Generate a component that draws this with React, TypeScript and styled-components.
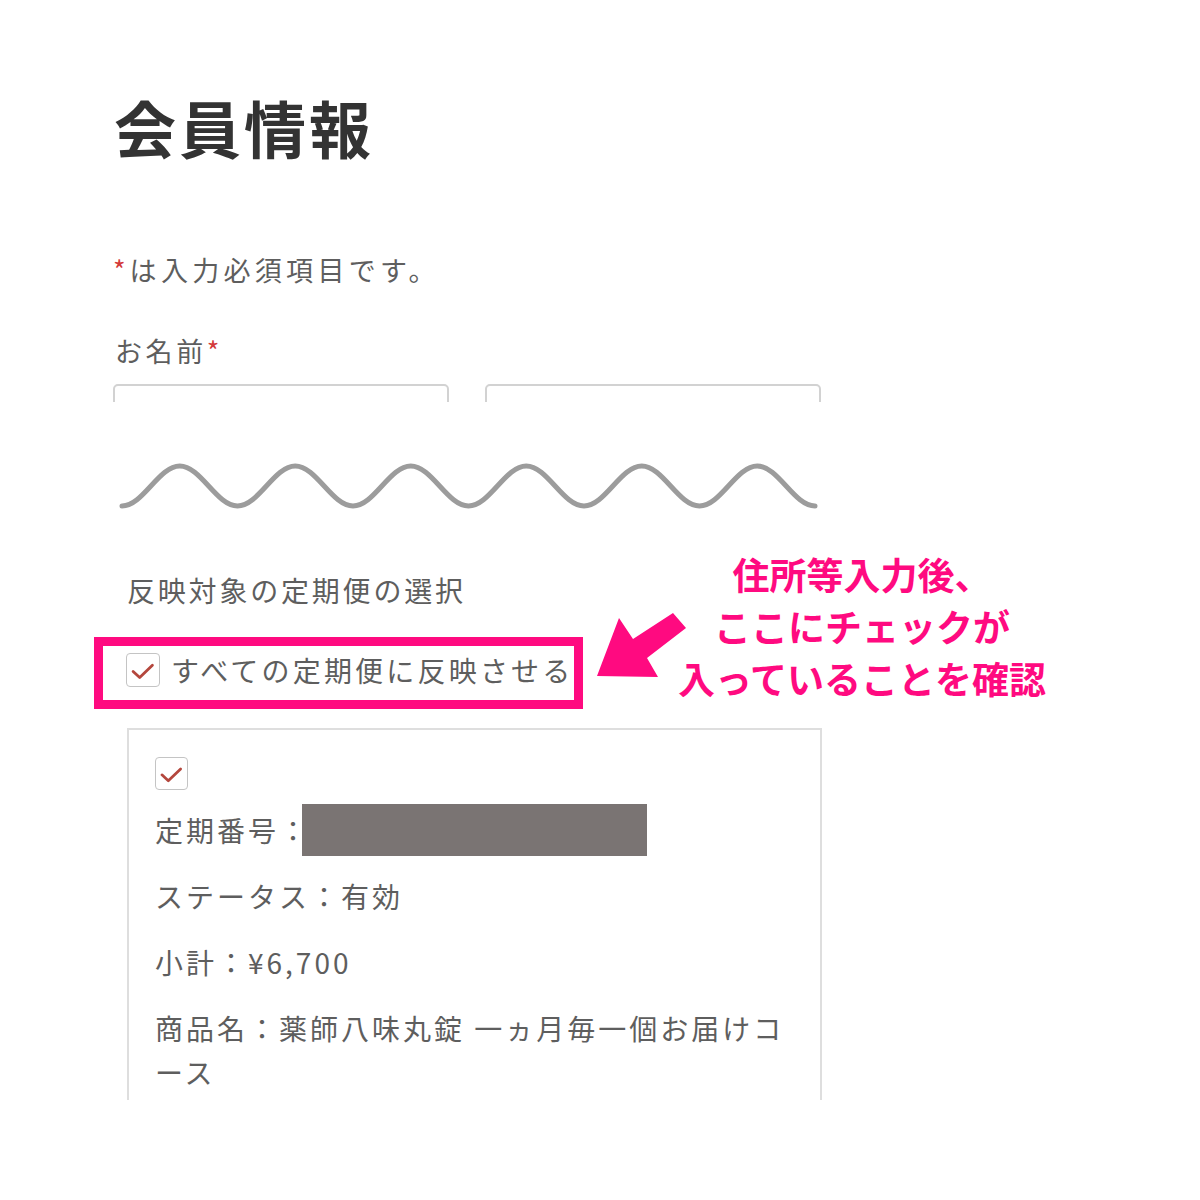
import React from "react";
import styled, { createGlobalStyle } from "styled-components";

const GlobalStyle = createGlobalStyle`
  html, body {
    margin: 0;
    padding: 0;
    background: #ffffff;
  }
  body {
    font-family: "Noto Sans CJK JP", "Noto Sans", sans-serif;
  }
`;

const PINK = "#ff0a80";
const TEXT = "#5e5e5e";

const Page = styled.div`
  position: relative;
  width: 1200px;
  height: 1200px;
  overflow: hidden;
  background: #fff;
  box-sizing: border-box;
  padding: 92px 0 0 113px;
  display: flex;
  flex-direction: column;
  align-items: flex-start;
  & > * {
    flex-shrink: 0;
  }
`;

const TopShot = styled.section`
  display: flex;
  flex-direction: column;
  align-items: flex-start;
`;

const Title = styled.h1`
  margin: 0 0 0 1px;
  font-size: 62px;
  line-height: 70px;
  font-weight: 700;
  letter-spacing: 3px;
  color: #333;
`;

const Note = styled.p`
  margin: 88px 0 0 0;
  font-size: 27px;
  line-height: 40px;
  letter-spacing: 4.3px;
  color: ${TEXT};
`;

const Req = styled.span`
  color: #d33a3a;
  letter-spacing: 0;
  margin-right: 4px;
`;

const FieldLabel = styled.p`
  margin: 41px 0 0 2px;
  font-size: 27px;
  line-height: 40px;
  letter-spacing: 3.6px;
  color: ${TEXT};
`;

const InputClip = styled.div`
  margin-top: 13px;
  height: 18px;
  overflow: hidden;
  display: flex;
  gap: 36px;
`;

const TextInput = styled.div<{ $w: number }>`
  width: ${(p) => p.$w}px;
  height: 50px;
  box-sizing: border-box;
  border: 2px solid #d2d2d2;
  border-radius: 5px;
  background: #fff;
`;

const WaveSvg = styled.svg`
  display: block;
  margin-top: 53px;
  overflow: visible;
`;

const BottomShot = styled.section`
  margin-top: 55px;
  margin-left: -20px;
  padding-left: 20px;
  height: 530px;
  overflow: hidden;
  display: flex;
  flex-direction: column;
  align-items: flex-start;
  & > * {
    flex-shrink: 0;
  }
`;

const SectionLabel = styled.p`
  margin: 0 0 0 14px;
  font-size: 28px;
  line-height: 40px;
  letter-spacing: 2.8px;
  color: ${TEXT};
`;

const Highlight = styled.div`
  margin: 27px 0 0 -19px;
  box-sizing: border-box;
  height: 72px;
  border: 9px solid ${PINK};
  padding: 0 0 6px 23px;
  display: flex;
  align-items: center;
  gap: 11px;
`;

const Box = styled.span<{ $size: number }>`
  flex: none;
  width: ${(p) => p.$size}px;
  height: ${(p) => p.$size}px;
  box-sizing: border-box;
  border: 1.5px solid #c4c4c4;
  border-radius: 4px;
  background: #fff;
  display: flex;
  align-items: center;
  justify-content: center;
`;

const CheckLabel = styled.span`
  font-size: 28px;
  line-height: 40px;
  letter-spacing: 3.2px;
  color: ${TEXT};
  white-space: nowrap;
`;

const Card = styled.div`
  margin: 19px 0 0 14px;
  width: 695px;
  box-sizing: border-box;
  border: 2px solid #dedede;
  padding: 27px 25px 40px 26px;
  display: flex;
  flex-direction: column;
  align-items: flex-start;
  gap: 22px;
`;

const CardCheck = styled.div`
  margin-bottom: -4px;
`;

const Row = styled.div`
  display: flex;
  align-items: center;
  min-height: 44px;
  font-size: 28px;
  line-height: 44px;
  letter-spacing: 3px;
  color: ${TEXT};
`;

const Redacted = styled.span`
  display: block;
  width: 345px;
  height: 52px;
  margin: -4px 0 -4px -8px;
  background: #7a7473;
`;

const Annotation = styled.div`
  position: absolute;
  left: 662px;
  top: 548px;
  width: 400px;
  text-align: center;
  font-size: 37px;
  line-height: 52px;
  font-weight: 700;
  color: ${PINK};
  letter-spacing: 0;
`;

const ArrowSvg = styled.svg`
  position: absolute;
  left: 590px;
  top: 605px;
`;

function Check({ size }: { size: number }) {
  return (
    <Box $size={size}>
      <svg width={size} height={size} viewBox="0 0 34 34" style={{ display: "block" }}>
        <polyline
          points="6.5,18.5 13.5,25 27,12"
          fill="none"
          stroke="#b4473d"
          strokeWidth="3"
          strokeLinecap="round"
          strokeLinejoin="round"
        />
      </svg>
    </Box>
  );
}

function wavePath(): string {
  const x0 = 9;
  const half = 57.75;
  const low = 51;
  const high = 11;
  let d = `M${x0},${low}`;
  for (let i = 0; i < 12; i++) {
    const xs = x0 + i * half;
    const xe = xs + half;
    const ys = i % 2 === 0 ? low : high;
    const ye = i % 2 === 0 ? high : low;
    d += ` C${(xs + half * 0.3642).toFixed(2)},${ys} ${(xs + half * 0.6358).toFixed(2)},${ye} ${xe.toFixed(2)},${ye}`;
  }
  return d;
}

export default function App() {
  return (
    <>
      <GlobalStyle />
      <Page>
        <TopShot>
          <Title>会員情報</Title>
          <Note>
            <Req>*</Req>は入力必須項目です。
          </Note>
          <FieldLabel>
            お名前<Req>*</Req>
          </FieldLabel>
          <InputClip>
            <TextInput $w={336} />
            <TextInput $w={336} />
          </InputClip>
        </TopShot>

        <WaveSvg width="720" height="60" viewBox="0 0 720 60">
          <path
            d={wavePath()}
            fill="none"
            stroke="#9c9c9c"
            strokeWidth="5"
            strokeLinecap="round"
          />
        </WaveSvg>

        <BottomShot>
          <SectionLabel>反映対象の定期便の選択</SectionLabel>
          <Highlight>
            <Check size={34} />
            <CheckLabel>すべての定期便に反映させる</CheckLabel>
          </Highlight>
          <Card>
            <CardCheck>
              <Check size={33} />
            </CardCheck>
            <Row>
              定期番号：<Redacted />
            </Row>
            <Row>ステータス：有効</Row>
            <Row>小計：¥6,700</Row>
            <Row>商品名：薬師八味丸錠 一ヵ月毎一個お届けコース</Row>
          </Card>
        </BottomShot>

        <Annotation>
          住所等入力後、
          <br />
          ここにチェックが
          <br />
          入っていることを確認
        </Annotation>

        <ArrowSvg width="105" height="80" viewBox="0 0 105 80">
          <polygon
            points="7,71 29,13 43,34 83,8 96,23 57,53 68,72"
            fill={PINK}
          />
        </ArrowSvg>
      </Page>
    </>
  );
}
